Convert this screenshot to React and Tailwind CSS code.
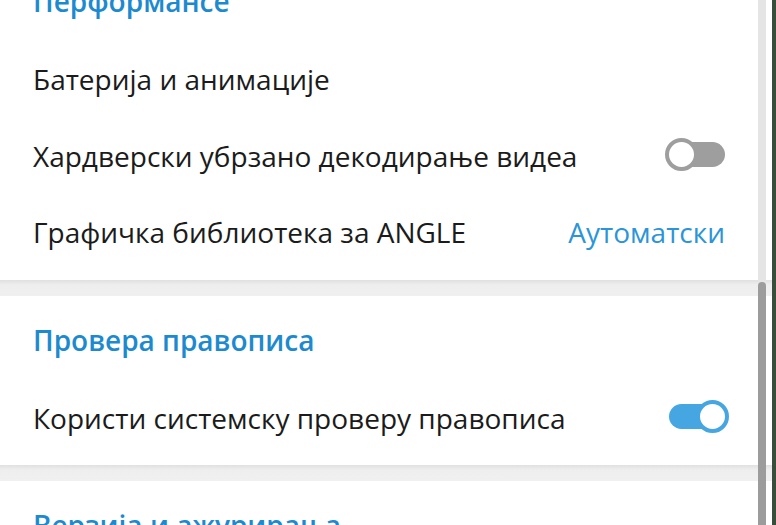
import React from 'react'

function Toggle({ on }) {
  return (
    <div className="relative w-[64px] h-[33px] shrink-0 -mr-[4px] -mt-[3px]">
      <div className={`absolute left-[4px] right-[4px] top-[4px] h-[25px] rounded-full ${on ? 'bg-[#45a6e2]' : 'bg-[#9e9e9e]'}`} />
      <div
        className={`absolute top-0 w-[33px] h-[33px] rounded-full bg-white border-[4px] ${on ? 'right-0 border-[#45a6e2]' : 'left-0 border-[#9e9e9e]'}`}
      />
    </div>
  )
}

function Row({ label, right }) {
  return (
    <div className="h-[76.5px] flex items-center justify-between">
      <span className="text-[28px] leading-[38px] text-[#1b1b1b]">{label}</span>
      {right}
    </div>
  )
}

function Section({ title, children, first }) {
  return (
    <section className={`bg-white pl-[33px] pr-[47px] pt-[25px] pb-[9px] ${first ? '-mt-[43px]' : ''}`}>
      <h2 className="text-[28px] leading-[38px] font-semibold text-[#1d8ad0]">{title}</h2>
      <div className="mt-[21px]">{children}</div>
    </section>
  )
}

function Divider() {
  return <div className="h-[16px] bg-[#f0f0f0] bg-gradient-to-b from-[#e0e0e0] via-[#eeeeee] via-30% to-[#f0f0f0]" />
}

export default function App() {
  return (
    <div className="w-[776px] h-[525px] overflow-hidden flex bg-white" style={{ fontFamily: '"Open Sans", "Noto Sans", sans-serif' }}>
      <div className="relative w-[772px] h-full overflow-hidden">
        <Section first title="Перформансе">
          <Row label="Батерија и анимације" />
          <Row label="Хардверски убрзано декодирање видеа" right={<Toggle on={false} />} />
          <Row label="Графичка библиотека за ANGLE" right={<span className="text-[28px] leading-[38px] text-[#2b95d8]">Аутоматски</span>} />
        </Section>
        <Divider />
        <Section title="Провера правописа">
          <Row label="Користи системску проверу правописа" right={<Toggle on />} />
        </Section>
        <Divider />
        <Section title="Верзија и ажурирања">
          <Row label="Аутоматски ажурирај" />
        </Section>

        <div className="absolute top-0 bottom-0 left-[758px] w-[8px] bg-[#e5e5e5]">
          <div className="absolute left-0 right-0 top-[282px] bottom-0 rounded-t-full bg-[#9c9c9c]" />
        </div>
      </div>
      <div className="w-[4px] h-full bg-[#3a4c3a]" />
    </div>
  )
}
